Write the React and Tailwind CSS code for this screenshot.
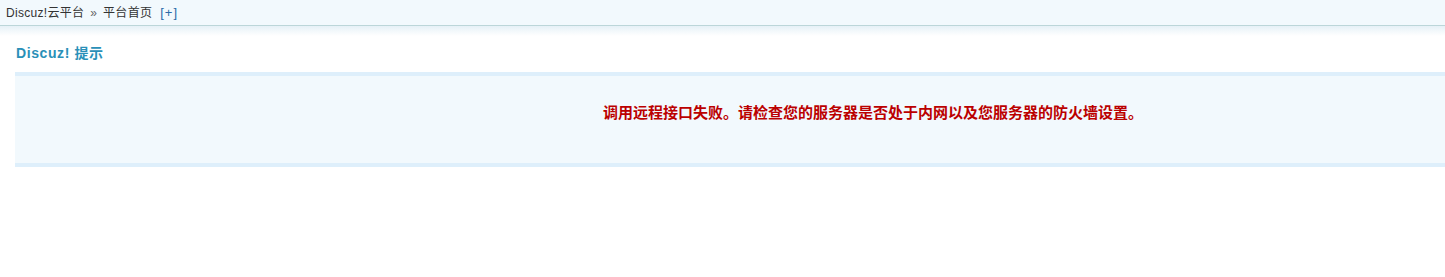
export default function App() {
  return (
    <div className="h-[277px] w-full overflow-hidden bg-white font-['Liberation_Sans','Noto_Sans_CJK_SC',sans-serif] text-[12px] text-[#333]">
      {/* Breadcrumb bar */}
      <div className="flex h-[26px] items-center border-b border-[#bcd6d9] bg-[#f2f9fd] pl-[6px] leading-none">
        <span className="tracking-[0.3px]">Discuz!云平台</span>
        <span className="mx-[6px] text-[#666]">»</span>
        <span className="tracking-[0.3px]">平台首页</span>
        <span className="ml-[8px] text-[13px] tracking-[1px] text-[#2b6aa8]">[+]</span>
      </div>
      <div className="h-[10px] bg-gradient-to-b from-[#e6f1f7] to-white" />

      <div className="pl-[15px]">
        <h3 className="mt-[7px] h-[20px] pl-[1px] text-[14px] font-bold leading-[20px] tracking-[0.6px] text-[#2a90b8]">Discuz! 提示</h3>
        <div className="mt-[9px] w-[1712px] border-y-4 border-[#deeffb] bg-[#f2f9fd]">
          <div className="flex h-[87px] justify-center pt-[28px]">
            <p className="pl-[4px] text-[15px] font-bold leading-[18px] text-[#b00]">
              调用远程接口失败。请检查您的服务器是否处于内网以及您服务器的防火墙设置。
            </p>
          </div>
        </div>
      </div>
    </div>
  );
}
